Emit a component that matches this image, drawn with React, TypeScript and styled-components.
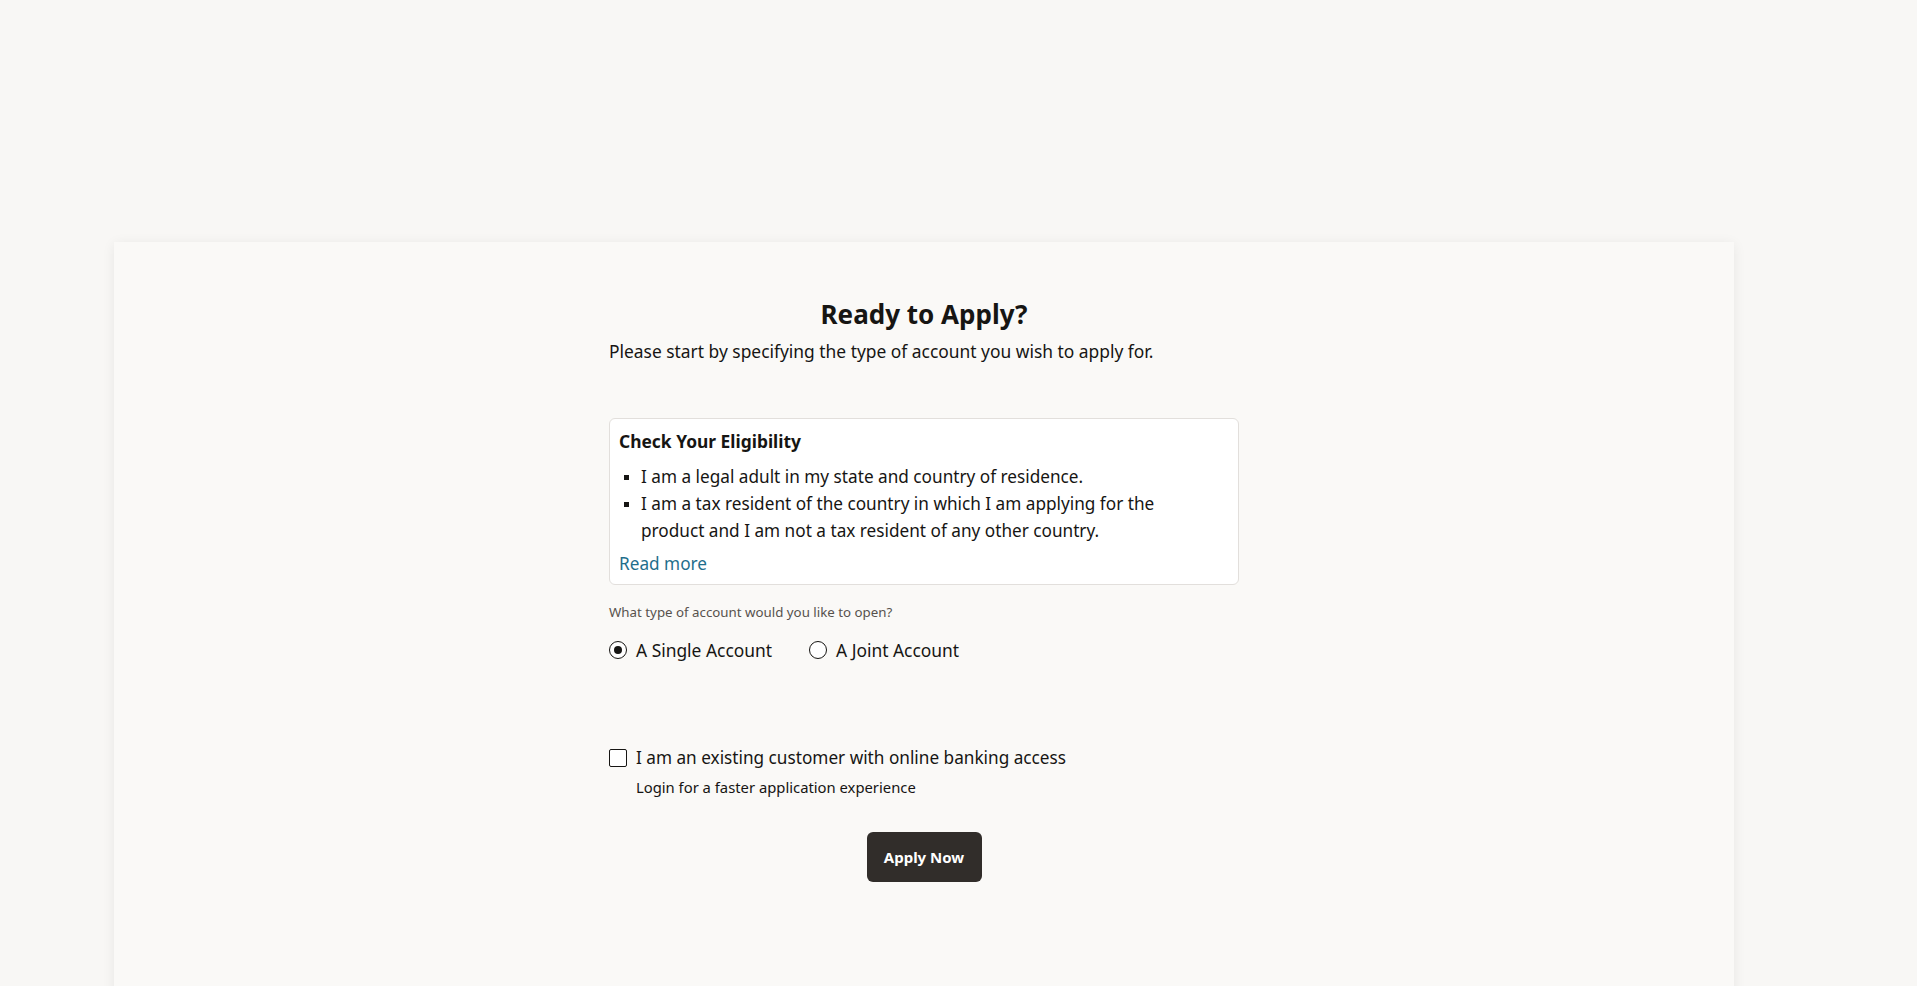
import { useState } from "react";
import styled, { createGlobalStyle } from "styled-components";

const GlobalStyle = createGlobalStyle`
  html, body {
    margin: 0;
    padding: 0;
    background: #f8f7f5;
    color: #161513;
    font-family: "Noto Sans", "Open Sans", sans-serif;
  }
  * {
    box-sizing: border-box;
  }
`;

const SPage = styled.div`
  width: 1934px;
  padding: 242px 200px 0 114px;
`;

const SCard = styled.section`
  width: 1620px;
  height: 770px;
  background: #faf9f7;
  box-shadow: 0 2px 12px rgba(0, 0, 0, 0.07);
  display: flex;
  justify-content: center;
  padding-top: 56px;
`;

const SColumn = styled.div`
  width: 630px;
  display: flex;
  flex-direction: column;
`;

const STitle = styled.h1`
  margin: 0;
  font-size: 26px;
  line-height: 32px;
  font-weight: 700;
  text-align: center;
`;

const SSubtitle = styled.p`
  margin: 9px 0 0;
  font-size: 17.4px;
  line-height: 24px;
`;

const SEligibility = styled.div`
  margin-top: 55px;
  background: #ffffff;
  border: 1px solid #e2dfdc;
  border-radius: 6px;
  padding: 10px 9px 8px;
`;

const SBoxTitle = styled.h2`
  margin: 0;
  font-size: 17.4px;
  line-height: 24px;
  font-weight: 700;
`;

const SList = styled.ul`
  margin: 10px 0 0;
  padding-left: 22px;
  width: 560px;
  list-style: square;
  font-size: 17.2px;
  line-height: 27px;

  li::marker {
    font-size: 14px;
  }
`;

const SLink = styled.a`
  display: block;
  margin-top: 8px;
  font-size: 17.2px;
  line-height: 24px;
  color: #1f6e8c;
  text-decoration: none;
  cursor: pointer;
`;

const SLabel = styled.div`
  margin-top: 17px;
  font-size: 13.3px;
  line-height: 20px;
  color: #57524d;
`;

const SRadioGroup = styled.div`
  margin-top: 16px;
  display: flex;
  gap: 37px;
`;

const SChoice = styled.label`
  display: flex;
  align-items: center;
  gap: 9px;
  font-size: 17.4px;
  line-height: 24px;
  cursor: pointer;
`;

const SRadio = styled.input`
  appearance: none;
  margin: 0;
  width: 18px;
  height: 18px;
  border: 1.5px solid #161513;
  border-radius: 50%;
  display: grid;
  place-content: center;
  background: #ffffff;

  &::before {
    content: "";
    width: 8px;
    height: 8px;
    border-radius: 50%;
    background: #161513;
    transform: scale(${({ checked }) => (checked ? 1 : 0)});
  }
`;

const SCheckRow = styled(SChoice)`
  margin-top: 84px;
  font-size: 17.2px;
`;

const SCheckbox = styled.input`
  appearance: none;
  margin: 0;
  width: 18px;
  height: 18px;
  border: 1.5px solid #161513;
  border-radius: 2px;
  background: #ffffff;
`;

const SHint = styled.div`
  margin: 7px 0 0 27px;
  font-size: 14.8px;
  line-height: 20px;
`;

const SButton = styled.button`
  align-self: center;
  margin-top: 35px;
  width: 115px;
  height: 50px;
  border: none;
  border-radius: 6px;
  background: #312d2a;
  color: #ffffff;
  font-family: inherit;
  font-size: 15px;
  font-weight: 700;
  cursor: pointer;
`;

const App = () => {
  const [accountType, setAccountType] = useState("single");
  const [existing, setExisting] = useState(false);

  return (
    <>
      <GlobalStyle />
      <SPage>
        <SCard>
          <SColumn>
            <STitle>Ready to Apply?</STitle>
            <SSubtitle>
              Please start by specifying the type of account you wish to apply for.
            </SSubtitle>
            <SEligibility>
              <SBoxTitle>Check Your Eligibility</SBoxTitle>
              <SList>
                <li>I am a legal adult in my state and country of residence.</li>
                <li>
                  I am a tax resident of the country in which I am applying for the
                  product and I am not a tax resident of any other country.
                </li>
              </SList>
              <SLink>Read more</SLink>
            </SEligibility>
            <SLabel>What type of account would you like to open?</SLabel>
            <SRadioGroup>
              <SChoice>
                <SRadio
                  type="radio"
                  name="account"
                  checked={accountType === "single"}
                  onChange={() => setAccountType("single")}
                />
                A Single Account
              </SChoice>
              <SChoice>
                <SRadio
                  type="radio"
                  name="account"
                  checked={accountType === "joint"}
                  onChange={() => setAccountType("joint")}
                />
                A Joint Account
              </SChoice>
            </SRadioGroup>
            <SCheckRow>
              <SCheckbox
                type="checkbox"
                checked={existing}
                onChange={() => setExisting(!existing)}
              />
              I am an existing customer with online banking access
            </SCheckRow>
            <SHint>Login for a faster application experience</SHint>
            <SButton>Apply Now</SButton>
          </SColumn>
        </SCard>
      </SPage>
    </>
  );
};

export default App;
